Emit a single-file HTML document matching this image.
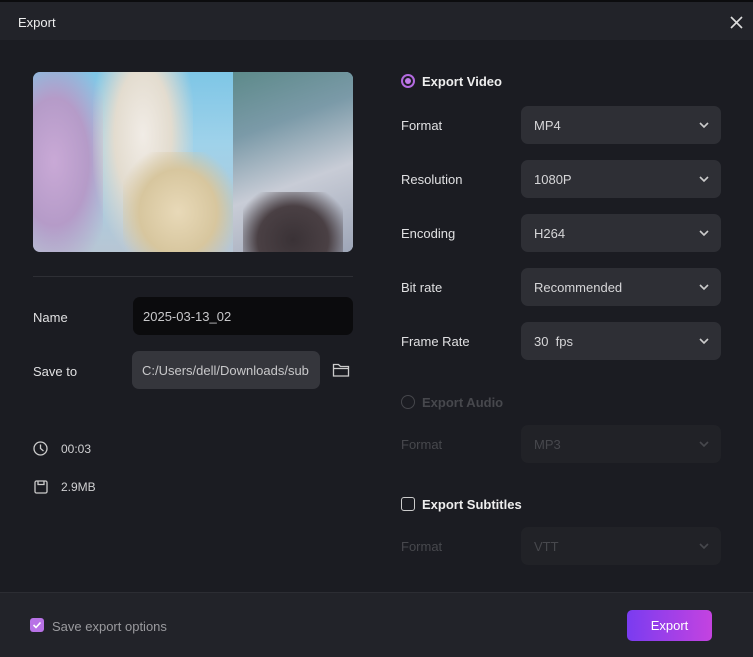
<!DOCTYPE html>
<html><head><meta charset="utf-8"><style>
*{box-sizing:border-box;margin:0;padding:0}
body{width:753px;height:657px;background:#1b1c22;font-family:"Liberation Sans",sans-serif;position:relative;overflow:hidden;color:#e6e6e8}
.a{position:absolute}
.title{left:0;top:0;width:753px;height:40px;background:#222329;border-top:2px solid #0c0c0e}
.lbl{font-size:13px;color:#e0e0e2}
.dd{position:absolute;left:521px;width:200px;height:38px;background:#2e2f35;border-radius:7px;font-size:13px;color:#d6d6d8;padding:12px 0 0 13px}
.dd svg{position:absolute;right:12px;top:16px}
.dis{background:#212227;color:#47484d}
.footer{left:0;top:592px;width:753px;height:65px;background:#222329;border-top:1px solid #2c2d33}
</style></head><body>
<div class="a title"><div class="a" style="left:18px;top:13px;font-size:13px;color:#eee">Export</div>
<svg class="a" style="left:730px;top:14px" width="13" height="13"><path d="M1 1L12 12M12 1L1 12" stroke="#ddd" stroke-width="1.6"/></svg></div>

<div class="a" style="left:33px;top:72px;width:320px;height:180px;border-radius:7px;overflow:hidden;background:linear-gradient(180deg,#7ec6e6 0%,#9fd2ea 40%,#b7c6d4 100%)">
<div class="a" style="left:0;top:0;width:70px;height:180px;background:radial-gradient(ellipse at 30% 50%,#c9a9d6 0%,#b59bc8 50%,rgba(180,150,200,0) 90%)"></div>
<div class="a" style="left:200px;top:0;width:120px;height:180px;background:linear-gradient(160deg,#5d8a8a 0%,#7b9aa8 30%,#c8ccd6 60%,#9ea6b8 100%)"></div>
<div class="a" style="left:60px;top:0;width:100px;height:180px;background:radial-gradient(ellipse at 50% 35%,#f1ece6 0%,#e3dccf 40%,rgba(220,210,190,0) 75%)"></div>
<div class="a" style="left:90px;top:80px;width:110px;height:100px;background:radial-gradient(ellipse at 50% 60%,#e8d9b8 0%,#d7c69e 50%,rgba(210,190,150,0) 80%)"></div>
<div class="a" style="left:210px;top:120px;width:100px;height:60px;background:radial-gradient(ellipse at 50% 80%,#3a3236 0%,#4a4044 50%,rgba(70,60,60,0) 85%)"></div>
</div>
<div class="a" style="left:33px;top:276px;width:320px;height:1px;background:#2e2f35"></div>

<div class="a lbl" style="left:33px;top:310px">Name</div>
<div class="a" style="left:133px;top:297px;width:220px;height:38px;background:#0b0b0d;border-radius:7px;font-size:13px;color:#c8c8ca;padding:12px 0 0 10px">2025-03-13_02</div>
<div class="a lbl" style="left:33px;top:364px">Save to</div>
<div class="a" style="left:132px;top:351px;width:188px;height:38px;background:#35363c;border-radius:7px;font-size:13px;color:#c8c8ca;padding:12px 0 0 10px;white-space:nowrap;overflow:hidden">C:/Users/dell/Downloads/sub</div>
<svg class="a" style="left:332px;top:362px" width="18" height="16"><path d="M1.5 2.5h5l2 2h8v9.5h-15z M1.5 6.5h15" fill="none" stroke="#ccc" stroke-width="1.3"/></svg>

<svg class="a" style="left:33px;top:441px" width="15" height="15"><circle cx="7.5" cy="7.5" r="6.5" fill="none" stroke="#ccc" stroke-width="1.3"/><path d="M7.5 3.5v4l3 2.5" fill="none" stroke="#ccc" stroke-width="1.3"/></svg>
<div class="a lbl" style="left:61px;top:442px;font-size:12px;color:#cfcfd1">00:03</div>
<svg class="a" style="left:34px;top:480px" width="14" height="14"><rect x="1" y="1" width="12" height="12" rx="1.5" fill="none" stroke="#ccc" stroke-width="1.3"/><path d="M4 1v3.5h6V1" fill="none" stroke="#ccc" stroke-width="1.3"/></svg>
<div class="a lbl" style="left:61px;top:480px;font-size:12px;color:#cfcfd1">2.9MB</div>

<div class="a" style="left:401px;top:74px;width:14px;height:14px;border-radius:50%;border:2px solid #b36ae0;background:#1b1c22"><div style="margin:2px;width:6px;height:6px;border-radius:50%;background:#c07ce8"></div></div>
<div class="a" style="left:422px;top:74px;font-size:13px;font-weight:bold;color:#eee">Export Video</div>

<div class="a lbl" style="left:401px;top:118px">Format</div>
<div class="dd" style="top:106px">MP4<svg width="10" height="7"><path d="M1 1l4 4 4-4" fill="none" stroke="#ccc" stroke-width="1.6"/></svg></div>
<div class="a lbl" style="left:401px;top:172px">Resolution</div>
<div class="dd" style="top:160px">1080P<svg width="10" height="7"><path d="M1 1l4 4 4-4" fill="none" stroke="#ccc" stroke-width="1.6"/></svg></div>
<div class="a lbl" style="left:401px;top:226px">Encoding</div>
<div class="dd" style="top:214px">H264<svg width="10" height="7"><path d="M1 1l4 4 4-4" fill="none" stroke="#ccc" stroke-width="1.6"/></svg></div>
<div class="a lbl" style="left:401px;top:280px">Bit rate</div>
<div class="dd" style="top:268px">Recommended<svg width="10" height="7"><path d="M1 1l4 4 4-4" fill="none" stroke="#ccc" stroke-width="1.6"/></svg></div>
<div class="a lbl" style="left:401px;top:334px">Frame Rate</div>
<div class="dd" style="top:322px">30&nbsp; fps<svg width="10" height="7"><path d="M1 1l4 4 4-4" fill="none" stroke="#ccc" stroke-width="1.6"/></svg></div>

<div class="a" style="left:401px;top:395px;width:14px;height:14px;border-radius:50%;border:1.5px solid #45464b"></div>
<div class="a" style="left:422px;top:395px;font-size:13px;font-weight:bold;color:#47484d">Export Audio</div>
<div class="a lbl" style="left:401px;top:437px;color:#47484d">Format</div>
<div class="dd dis" style="top:425px">MP3<svg width="10" height="7"><path d="M1 1l4 4 4-4" fill="none" stroke="#47484d" stroke-width="1.6"/></svg></div>

<div class="a" style="left:401px;top:497px;width:14px;height:14px;border-radius:3px;border:1.5px solid #ccc"></div>
<div class="a" style="left:422px;top:497px;font-size:13px;font-weight:bold;color:#eee">Export Subtitles</div>
<div class="a lbl" style="left:401px;top:539px;color:#47484d">Format</div>
<div class="dd dis" style="top:527px">VTT<svg width="10" height="7"><path d="M1 1l4 4 4-4" fill="none" stroke="#47484d" stroke-width="1.6"/></svg></div>

<div class="a footer">
<div class="a" style="left:30px;top:25px;width:14px;height:14px;border-radius:3px;background:#b872e6"><svg width="14" height="14"><path d="M3.5 7l2.5 2.5 4.5-5" fill="none" stroke="#fff" stroke-width="1.6"/></svg></div>
<div class="a" style="left:52px;top:26px;font-size:13px;color:#9a9a9e">Save export options</div>
<div class="a" style="left:627px;top:17px;width:85px;height:31px;border-radius:5px;background:linear-gradient(90deg,#7a3cf0,#c443e0);font-size:13px;color:#fff;text-align:center;line-height:31px">Export</div>
</div>
</body></html>
